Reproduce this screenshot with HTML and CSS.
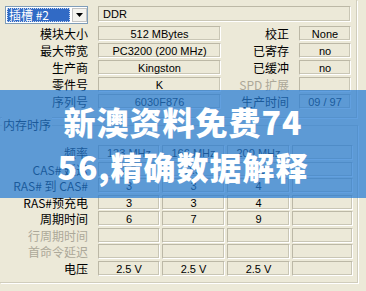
FILE: index.html
```html
<!DOCTYPE html>
<html lang="zh-CN">
<head>
  <meta charset="UTF-8">
  <title>SPD</title>
  <link rel="stylesheet" href="styles.css">
</head>
<body>

  <div class="slot-group">
    <div class="slot-row">
      <div class="combo">
        <span class="combo-value">插槽 #2</span>
        <span class="combo-btn">
          <svg width="7" height="4" viewBox="0 0 7 4"><path d="M0 0h7L3.5 4z" fill="#000"/></svg>
        </span>
      </div>
      <div class="field type">DDR</div>
    </div>

    <div class="module-grid">
      <div class="lbl">模块大小</div><div class="field">512 MBytes</div>
      <div class="lbl">校正</div><div class="field">None</div>

      <div class="lbl">最大带宽</div><div class="field">PC3200 (200 MHz)</div>
      <div class="lbl">已寄存</div><div class="field">no</div>

      <div class="lbl">生产商</div><div class="field">Kingston</div>
      <div class="lbl">已缓冲</div><div class="field">no</div>

      <div class="lbl">零件号</div><div class="field">K</div>
      <div class="lbl dim">SPD 扩展</div><div class="field"></div>

      <div class="lbl">序列号</div><div class="field">6030F876</div>
      <div class="lbl">生产时间</div><div class="field">09 / 97</div>
    </div>
  </div>

  <div class="timing-group">
    <div class="group-title">内存时序</div>
    <div class="timing-grid">
      <div class="lbl">频率</div>
      <div class="field">133 MHz</div><div class="field">166 MHz</div><div class="field">200 MHz</div><div class="field"></div>

      <div class="lbl">CAS# 延迟</div>
      <div class="field">2.5</div><div class="field">2.5</div><div class="field">3.0</div><div class="field"></div>

      <div class="lbl">RAS# 到 CAS#</div>
      <div class="field">3</div><div class="field">3</div><div class="field">4</div><div class="field"></div>

      <div class="lbl">RAS#预充电</div>
      <div class="field">3</div><div class="field">3</div><div class="field">4</div><div class="field"></div>

      <div class="lbl">周期时间</div>
      <div class="field">6</div><div class="field">7</div><div class="field">9</div><div class="field"></div>

      <div class="lbl dim">行周期时间</div>
      <div class="field"></div><div class="field"></div><div class="field"></div><div class="field"></div>

      <div class="lbl dim">首命令延迟</div>
      <div class="field"></div><div class="field"></div><div class="field"></div><div class="field"></div>

      <div class="lbl">电压</div>
      <div class="field">2.5 V</div><div class="field">2.5 V</div><div class="field">2.5 V</div><div class="field"></div>
    </div>
  </div>

  <div class="banner">新澳资料免费74<br>56,精确数据解释</div>

</body>
</html>
```

FILE: styles.css
```css
body {
  margin: 0;
  width: 366px;
  height: 291px;
  overflow: hidden;
  background-color: #ece9d8;
  font-family: "Liberation Sans", "Noto Sans CJK SC", sans-serif;
  font-size: 11px;
  color: #000;
  position: relative;
}

/* slot + module info */
.slot-group {
  width: 356px;
  height: 117px;
  border-right: 1px solid #d0cdbc;
  border-bottom: 1px solid #d0cdbc;
  box-shadow: 1px 1px 0 #fff;
}
.slot-row {
  display: flex;
  padding-top: 6px;
  height: 17px;
}
.combo {
  margin-left: 5px;
  width: 81px;
  height: 16px;
  border: 1px solid #7f9db9;
  background-color: #fff;
  display: flex;
  padding: 0;
}
.combo-value {
  margin: 1px;
  width: 63px;
  background-color: #316ac5;
  color: #fff;
  outline: 1px dotted #c9d6ee;
  outline-offset: -1px;
  font-family: "Noto Sans CJK SC", sans-serif;
  font-size: 12px;
  line-height: 14px;
  padding-left: 2px;
}
.combo-btn {
  width: 15px;
  height: 14px;
  margin: 1px 0 1px 1px;
  background-color: #f4f3ee;
  border: 1px solid #c3c3c3;
  box-sizing: border-box;
  display: flex;
  align-items: center;
  justify-content: center;
}
.field {
  height: 15px;
  line-height: 14px;
  box-sizing: border-box;
  border: 1px solid #bcb8a6;
  border-right-color: #fff;
  border-bottom-color: #fff;
  box-shadow: inset -1px -1px 0 #c9c6b5;
  text-align: center;
  white-space: nowrap;
  overflow: hidden;
}
.field.type {
  margin-left: 10px;
  width: 253px;
  height: 16px;
  text-align: left;
  padding-left: 4px;
  line-height: 15px;
}
.lbl {
  font-family: "Noto Sans CJK SC", sans-serif;
  font-size: 12px;
  line-height: 15px;
  text-align: right;
  padding-right: 8px;
  white-space: nowrap;
}
.lbl.dim {
  color: #aca899;
}
.module-grid {
  display: grid;
  grid-template-columns: 96px 123px 74px 52px;
  grid-auto-rows: 15px;
  column-gap: 2px;
  row-gap: 2px;
  margin-top: 3px;
}

/* timings */
.timing-group {
  position: relative;
  margin-top: 7px;
  width: 357px;
  height: 156px;
  border-top: 1px solid #d0cdbc;
  border-right: 1px solid #d0cdbc;
  border-bottom: 1px solid #d0cdbc;
  box-shadow: 1px 1px 0 #fff;
}
.group-title {
  position: absolute;
  left: 2px;
  top: -9px;
  padding: 0 1px;
  background-color: #ece9d8;
  font-family: "Noto Sans CJK SC", sans-serif;
  font-size: 12px;
  line-height: 16px;
}
.timing-grid {
  display: grid;
  grid-template-columns: 96px 62px 63px 63px 61px;
  grid-auto-rows: 15px;
  column-gap: 2px;
  row-gap: 1.5px;
  padding-top: 19px;
}

/* promo overlay */
.banner {
  position: absolute;
  left: 0;
  top: 90px;
  width: 366px;
  height: 108px;
  background-color: rgba(38, 124, 212, 0.72);
  color: #fff;
  font-family: "Noto Sans CJK SC", sans-serif;
  font-weight: 900;
  font-size: 32px;
  letter-spacing: 1px;
  line-height: 45px;
  text-align: center;
  display: flex;
  align-items: center;
  justify-content: center;
}
```
